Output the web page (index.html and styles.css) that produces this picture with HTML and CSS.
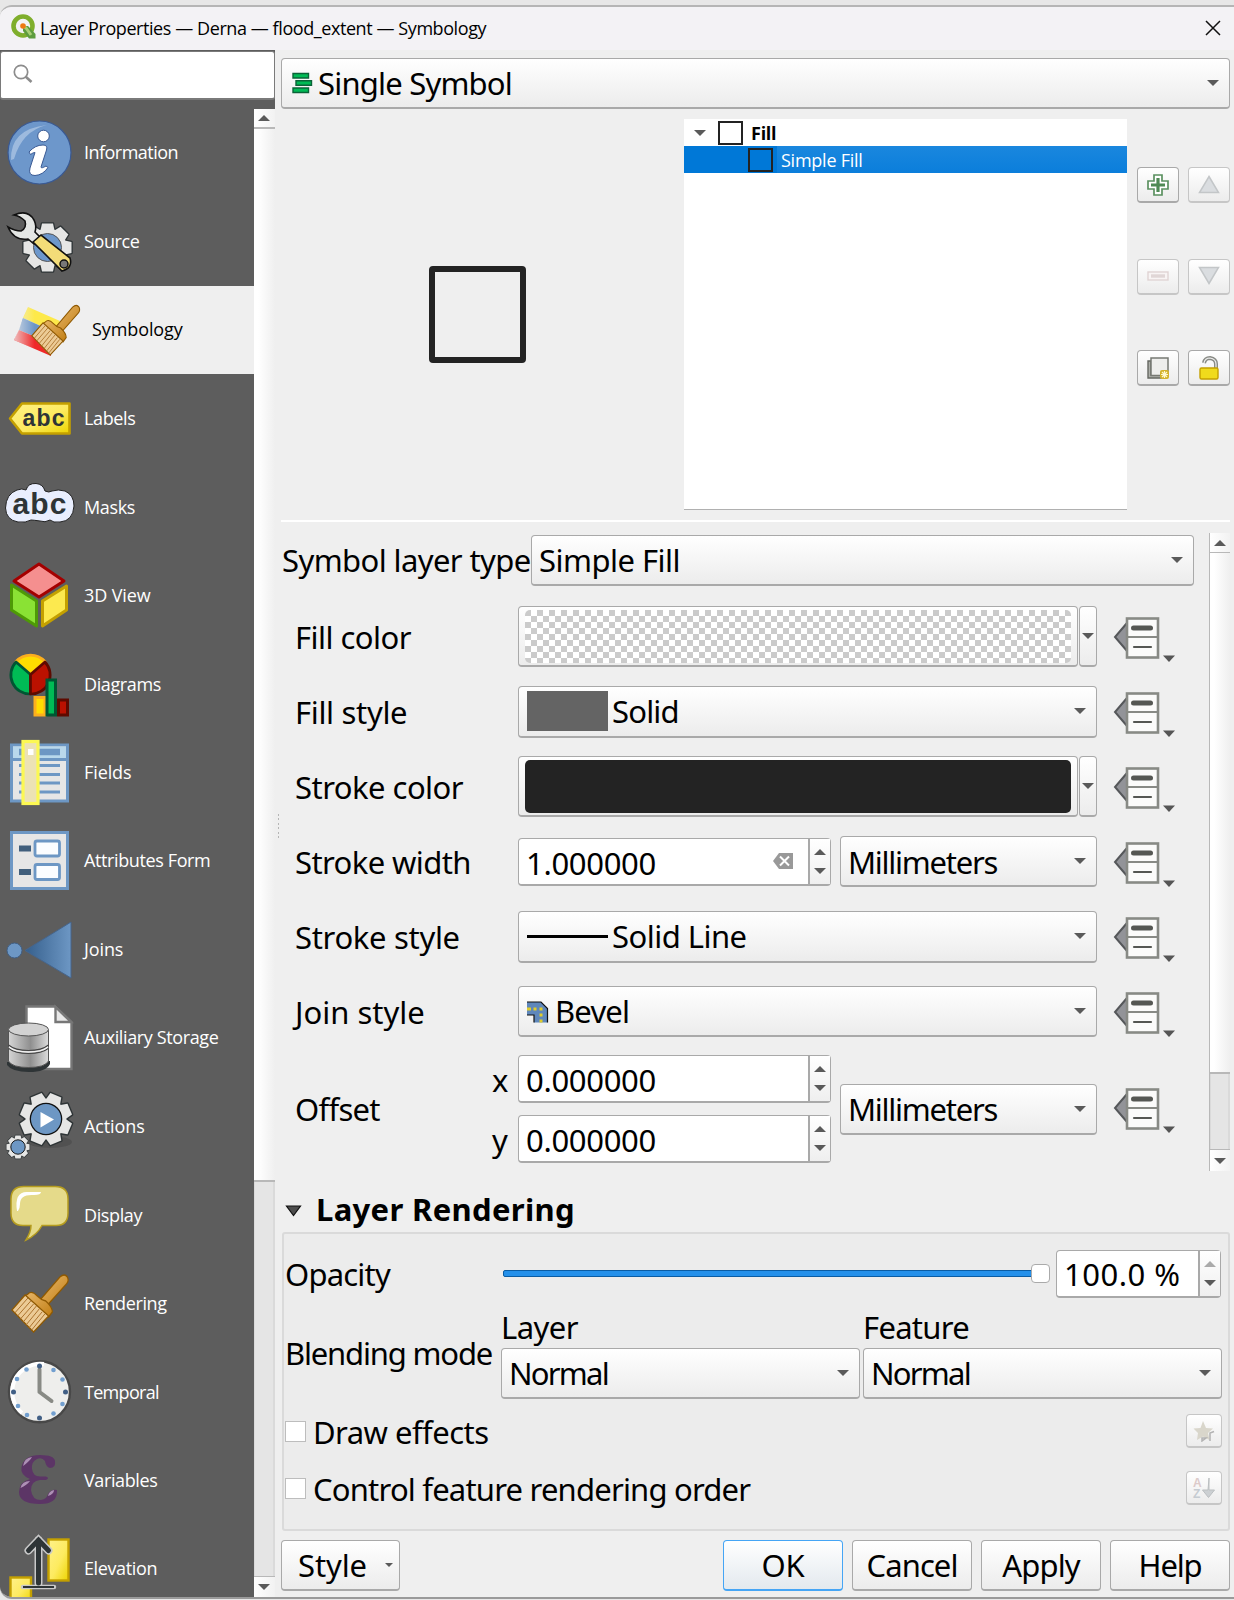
FILE: index.html
```html
<!DOCTYPE html>
<html lang="en">
<head>
<meta charset="utf-8">
<title>Layer Properties</title>
<link rel="stylesheet" href="styles.css">
</head>
<body>
<svg class="defs" width="0" height="0" aria-hidden="true">
  <defs>
    <linearGradient id="gWhite" x1="0" y1="0" x2="0" y2="1"><stop offset="0" stop-color="#fbfbfb"/><stop offset="1" stop-color="#d4d4d2"/></linearGradient>
    <linearGradient id="gYellow" x1="0" y1="0" x2="1" y2="1"><stop offset="0" stop-color="#fff18a"/><stop offset=".55" stop-color="#fdeb60"/><stop offset="1" stop-color="#edd400"/></linearGradient>
    <linearGradient id="gJoin" x1="0" y1="0" x2="1" y2="0"><stop offset="0" stop-color="#355f8c"/><stop offset="1" stop-color="#6d97c4"/></linearGradient>
    <linearGradient id="gCyl" x1="0" y1="0" x2="1" y2="0"><stop offset="0" stop-color="#d5d5d5"/><stop offset=".55" stop-color="#8f8f8f"/><stop offset="1" stop-color="#dcdcdc"/></linearGradient>
    <linearGradient id="gWood" x1="0" y1="0" x2="1" y2="1"><stop offset="0" stop-color="#e9b96e"/><stop offset="1" stop-color="#c17d11"/></linearGradient>
    <linearGradient id="gFade" x1="0" y1="0" x2="1" y2="0"><stop offset="0" stop-color="#efefef" stop-opacity=".75"/><stop offset=".45" stop-color="#efefef" stop-opacity="0"/></linearGradient>
    <g id="tooth8">
      <path id="t8" d="M-5.500 -24 L5.500 -24 L7.500 -15 L-7.500 -15 Z"/>
      <use href="#t8" transform="rotate(45)"/><use href="#t8" transform="rotate(90)"/><use href="#t8" transform="rotate(135)"/>
      <use href="#t8" transform="rotate(180)"/><use href="#t8" transform="rotate(225)"/><use href="#t8" transform="rotate(270)"/><use href="#t8" transform="rotate(315)"/>
      <circle r="19"/>
    </g>
    <g id="gear">
      <use href="#tooth8" fill="#2e3436" stroke="#2e3436" stroke-width="2.600" stroke-linejoin="round"/>
      <use href="#tooth8" fill="#e6e6e5"/>
    </g>
    <g id="brush">
      <path d="M29 28 L52 3 Q57 -1 60 3 Q62 7 59 10 L36 34 Z" fill="url(#gWood)" stroke="#8f5902" stroke-width="1.300"/>
      <path d="M18 20 Q22 16 28 22 Q32 26 37 27 Q44 33 44 38 L40 43 L12 24 Z" fill="url(#gWood)" stroke="#8f5902" stroke-width="1.300"/>
      <path d="M15 21 L1 36 L24 58 L40 42 Z" fill="#eccb96" stroke="#8f5902" stroke-width="1.300"/>
      <path d="M18 24 L4 39 M21 27 L7 42 M24 30 L10 45 M27 32 L13 48 M30 35 L16 51 M33 38 L19 54 M36 40 L22 56" stroke="#a9702a" stroke-width="1" fill="none"/>
    </g>
    <g id="dd">
      <path d="M14 6 L2 20 L14 34 Z" fill="#929398" stroke="#55575a" stroke-width="2"/>
      <rect x="14" y="1.500" width="31" height="39" fill="#fbfbfa" stroke="#888a85" stroke-width="2.600"/>
      <path d="M14 20 H45" stroke="#888a85" stroke-width="2"/>
      <path d="M20.500 11 H37.500" stroke="#555753" stroke-width="5" stroke-linecap="round"/>
      <path d="M21 30 H38" stroke="#555753" stroke-width="2.200" stroke-linecap="round"/>
      <path d="M50 38.500 H62 L56 45 Z" fill="#555"/>
    </g>
  </defs>
</svg>
<div class="window">
  <header class="titlebar">
    <svg class="logo" width="26" height="26" viewBox="0 0 26 26"><circle cx="12" cy="12" r="9.500" fill="none" stroke="#7fae2c" stroke-width="4.600"/><path d="M12 12 L17 12 L24.500 20 V24.500 H18 L12 17 Z" fill="#5d9c3e"/><path d="M12 12 L15 14 L20 21" stroke="#a8cf74" stroke-width="3" fill="none"/><circle cx="12" cy="12" r="2.800" fill="#ee7913"/></svg>
    <span class="title">Layer Properties — Derna — flood_extent — Symbology</span>
    <svg class="close" width="16" height="16" viewBox="0 0 16 16"><path d="M1 1 L15 15 M15 1 L1 15" stroke="#111" stroke-width="1.500"/></svg>
  </header>
  <div class="body">
    <aside class="sidebar">
      <div class="search"><svg width="20" height="20" viewBox="0 0 20 20"><circle cx="8" cy="8" r="6.700" fill="none" stroke="#8c8c8c" stroke-width="1.700"/><path d="M12.500 12.500 L18.500 18" stroke="#8c8c8c" stroke-width="2.600"/></svg></div>
      <div class="nav-wrap">
        <nav class="nav">
          <a class="item"><svg width="76" height="88" viewBox="0 0 76 88"><circle cx="39.500" cy="43.500" r="31.500" fill="#6d97cb" stroke="#3a5a94" stroke-width="1.200"/><path d="M11 51 Q10 20 47 16 Q22 22 14 50 Z" fill="#a9c3e2" opacity=".8"/><circle cx="43.500" cy="27" r="5.800" fill="#fff" stroke="#3a5a94" stroke-width="1"/><path d="M29 43 Q35 36 43 36 Q48 36 46.500 41 L41 58 Q41 60 46 57 L48 58.500 Q43 66 35 66.500 Q28 66.500 30 59 L35 43.500 Q33 43.500 30.500 45.500 Z" fill="#fff" stroke="#3a5a94" stroke-width="1"/></svg><span class="t5">Information</span></a>
          <a class="item"><svg width="76" height="88" viewBox="0 0 76 88"><g transform="translate(47.500 49.500)"><use href="#gear"/><circle r="14" fill="#6d97cb" stroke="#555" stroke-width="1"/></g><path d="M14 17 Q28 11 34 22 Q37 28 35 34 L41 40 L34 46 L28 41 Q14 43 8 29 Q15 33 21 33 Q27 30 25 23 Q20 18 14 17 Z" fill="#e4e6e4" stroke="#111" stroke-width="1.600"/><path d="M33 44 L41 37 L70 60 Q73 70 62 73 Z" fill="#f3dc78" stroke="#111" stroke-width="1.600"/><circle cx="64" cy="66" r="4" fill="#777" stroke="#111" stroke-width="1.500"/></svg><span>Source</span></a>
          <a class="item selected"><svg width="84" height="88" viewBox="0 0 84 88"><path d="M28 21 L60 35 L54 46 L23 32 Z" fill="#fde94a"/><path d="M23 32 L54 46 L50 57 L19 44 Z" fill="#6b94c6"/><path d="M19 44 L50 57 L51 70 L14 54 Z" fill="#ef2929"/><path d="M28 21 L60 35 L51 70 L14 54 Z" fill="url(#gFade)"/><g transform="translate(31 18.500) scale(.8 .87)"><use href="#brush"/></g></svg><span class="t1">Symbology</span></a>
          <a class="item"><svg width="76" height="88" viewBox="0 0 76 88"><path d="M10 44.500 L22 29.500 H69.500 V59.500 H22 Z" fill="url(#gYellow)" stroke="#c4a000" stroke-width="2.600" stroke-linejoin="round"/><text x="43.500" y="51.500" class="abc" font-size="23" textLength="42">abc</text></svg><span>Labels</span></a>
          <a class="item"><svg width="76" height="88" viewBox="0 0 76 88"><path d="M17 27 Q22 25 26 27 Q28 20 36 20.500 Q43 21 45 28 Q49 30 52 28 Q58 26 65 28 Q74 32 74 43 Q73 58 60 59 Q53 60 50 57 Q45 60 40 58 Q33 57 31 57 Q26 60 18 59 Q6 57 5.500 45 Q6 31 17 27 Z" fill="#e9eefe" stroke="#222" stroke-width="1"/><text x="39.500" y="51" class="abc" font-size="30" textLength="54">abc</text></svg><span>Masks</span></a>
          <a class="item"><svg width="76" height="88" viewBox="0 0 76 88"><g stroke-width="3" stroke-linejoin="round"><path d="M39 13 L64 30 L39 46 L14 30 Z" fill="#f58f8f" stroke="#a40000"/><path d="M11.500 34 L36.500 50 V75 L11.500 59 Z" fill="#8ae234" stroke="#4e9a06"/><path d="M42.500 50 L66.500 35 V59 L42.500 75 Z" fill="#fce94f" stroke="#c4a000"/></g></svg><span class="t1">3D View</span></a>
          <a class="item"><svg width="76" height="88" viewBox="0 0 76 88"><g stroke-width="2.700" stroke-linejoin="round"><path d="M30.500 34.500 L16 21.500 A19.500 19.500 0 0 1 45 21.500 Z" fill="#ffdd00" stroke="#fcaf1e"/><path d="M30.500 34.500 L16 22 A19 19 0 0 0 30.500 54 Z" fill="#00bb55" stroke="#005533"/><path d="M30.500 34.500 L45 22 A19 19 0 0 1 30.500 54 Z" fill="#bb1100" stroke="#5e0a00"/></g><g stroke-width="3"><path d="M35 57.500 H45 V75 H35 Z" fill="#ffdd00" stroke="#fcaf1e"/><path d="M58.500 60 H67.500 V75 H58.500 Z" fill="#bb1100" stroke="#5e0a00"/><path d="M47 40 H55.500 V75 H47 Z" fill="#00bb55" stroke="#005533"/></g></svg><span>Diagrams</span></a>
          <a class="item"><svg width="76" height="88" viewBox="0 0 76 88"><rect x="11.500" y="17" width="56" height="56" fill="#e6e6e6" stroke="#6d97c4" stroke-width="3"/><rect x="13" y="18.500" width="53" height="12" fill="#b9d8ec"/><path d="M13 31.500 H66" stroke="#6d97c4" stroke-width="3"/><path d="M19 24 H60" stroke="#6d97c4" stroke-width="6.500"/><path d="M19 37.500 H60 M19 46.500 H60 M19 55 H60 M19 64 H60" stroke="#6d97c4" stroke-width="2.800"/><rect x="23" y="13.500" width="15" height="62" fill="#ece2b4" stroke="#fcf852" stroke-width="3.200"/><rect x="28" y="21" width="5.500" height="6" fill="#fff"/></svg><span class="t1">Fields</span></a>
          <a class="item"><svg width="76" height="88" viewBox="0 0 76 88"><rect x="11.500" y="16.500" width="56" height="56" fill="#e6e6e6" stroke="#6d97c4" stroke-width="3"/><path d="M19 32.500 H31 M19 56 H31" stroke="#415f7c" stroke-width="6"/><g fill="#fbfdff" stroke="#6d97c4" stroke-width="2.800"><rect x="35" y="25" width="24.500" height="15" rx="2"/><rect x="35" y="48.500" width="24.500" height="15" rx="2"/></g></svg><span>Attributes Form</span></a>
          <a class="item"><svg width="76" height="88" viewBox="0 0 76 88"><circle cx="14.500" cy="45.500" r="7.500" fill="#6d97c4" stroke="#3f5f85" stroke-width="1"/><path d="M25 45.500 L71 17 V73 Z" fill="url(#gJoin)" stroke="#46658c" stroke-width="1"/></svg><span class="t1">Joins</span></a>
          <a class="item"><svg width="76" height="88" viewBox="0 0 76 88"><path d="M26.500 13.500 H55 L71.500 29 V76 H26.500 Z" fill="#fff" stroke="#777" stroke-width="2.400"/><path d="M55.500 14 V29 H71 Z" fill="#e8e8e8" stroke="#777" stroke-width="2.400"/><path d="M7 69 V72 Q12 79 29 79 Q46 79 50 71 V68 Z" fill="#2e3436"/><path d="M8.500 37 V68 Q12 74.500 28.500 74.500 Q45 74.500 48.500 68 V37 Z" fill="url(#gCyl)" stroke="#555" stroke-width="1"/><ellipse cx="28.500" cy="36.500" rx="20" ry="6.500" fill="#d2d2d2" stroke="#555"/><path d="M8.500 52 Q15 57.500 28.500 57.500 Q42 57.500 48.500 52" fill="none" stroke="#444" stroke-width="1.200"/><path d="M9 55.500 Q15 60.500 28.500 60.500 Q42 60.500 48 55.500" fill="none" stroke="#444" stroke-width="1.200"/><path d="M9 54 Q15 59 28.500 59 Q42 59 48 54" fill="none" stroke="#f3f3f3" stroke-width="1.400"/></svg><span>Auxiliary Storage</span></a>
          <a class="item"><svg width="76" height="88" viewBox="0 0 76 88"><ellipse cx="50" cy="61" rx="22" ry="6" fill="#4a4a4a" opacity=".6"/><g transform="translate(46 38) rotate(22.500) scale(1.070)"><use href="#gear"/><circle r="14.600" fill="#6d97c4" stroke="#111" stroke-width="1.200"/></g><path d="M40.500 31 V46.500 L54 38.500 Z" fill="#fff"/><g transform="translate(18 66) scale(.48)"><use href="#gear"/><circle r="15" fill="#6d97c4" stroke="#111" stroke-width="2"/></g></svg><span class="t1">Actions</span></a>
          <a class="item"><svg width="76" height="88" viewBox="0 0 76 88"><path d="M24 16.500 H55 Q68 16.500 68 29 V43 Q68 55.500 56 55.500 H42 Q37 65 26 70 Q31 62 31 55.500 H23 Q11 55.500 11 43 V29 Q11 16.500 24 16.500 Z" fill="#e5da8a" stroke="#b59c1f" stroke-width="1.500"/><path d="M17 41 Q14 21 28 22 L41 22 Q41 25 34 25 Q20 24 20 34 Q20 38 18 41 Z" fill="#fff"/></svg><span>Display</span></a>
          <a class="item"><svg width="76" height="88" viewBox="0 0 76 88"><g transform="translate(11 16) scale(.94 1)"><use href="#brush"/></g></svg><span>Rendering</span></a>
          <a class="item"><svg width="76" height="88" viewBox="0 0 76 88"><circle cx="39.500" cy="44.800" r="30.500" fill="#eeeeec" stroke="#484848" stroke-width="2.400"/><path d="M22 66 A28 28 0 0 1 44 17" fill="none" stroke="#fff" stroke-width="4"/><path d="M39.500 22.500 V45 L51.500 54" fill="none" stroke="#888a85" stroke-width="4" stroke-linecap="round" stroke-linejoin="round"/><g fill="#415f85"><circle cx="39.500" cy="19" r="2.500"/><circle cx="65.500" cy="45" r="2.500"/><circle cx="39.500" cy="71" r="2.500"/><circle cx="13.500" cy="45" r="2.500"/></g><g fill="#729fcf"><circle cx="53.500" cy="23" r="2.300"/><circle cx="62.500" cy="32.500" r="2.300"/><circle cx="62.500" cy="57" r="2.300"/><circle cx="53.500" cy="66.500" r="2.300"/><circle cx="27" cy="68" r="2.300"/><circle cx="18" cy="59" r="2.300"/><circle cx="17" cy="32" r="2.300"/><circle cx="26.500" cy="22.500" r="2.300"/></g></svg><span class="t7">Temporal</span></a>
          <a class="item"><svg width="76" height="88" viewBox="0 0 76 88"><path d="M55 26 Q56 33 50 33 Q46 32 45 26 Q42 22 37 24 Q31 27 32 34 Q33 41.500 40 41.500 L46 41.500 Q50 43 46 45 L40 45 Q31 46 31 55 Q32 65 41 65 Q47 64 48 59 Q51 54 57 55 Q58 69 40 69 Q19 69 19 57 Q19 47 30 44 Q20 40 21.500 32 Q24 20 40 20 Q54 20 55 26 Z" fill="#5c3566"/><path d="M23 31 Q24 23 32 22 Q30 26 23 31 Z M20.500 53 Q22 46 30 46 Q27 50 20.500 53 Z M48 61 Q49 56 54 55 Q54 59 48 61 Z" fill="#ad90b5"/></svg><span>Variables</span></a>
          <a class="item"><svg width="76" height="88" viewBox="0 0 76 88"><rect x="48.500" y="16.500" width="20" height="41" fill="url(#gYellow)" stroke="#c4a000" stroke-width="2.400"/><rect x="10.500" y="54.500" width="20.500" height="24" fill="url(#gYellow)" stroke="#c4a000" stroke-width="2.400"/><path d="M38.500 60 V17 M28.500 27.500 L38.500 17 L48.500 27.500" fill="none" stroke="#c9c9c9" stroke-width="8" stroke-linecap="round"/><path d="M23 64 H54" stroke="#c9c9c9" stroke-width="4.500" stroke-linecap="round"/><path d="M38.500 60 V17 M28.500 27.500 L38.500 17 L48.500 27.500" fill="none" stroke="#2e3436" stroke-width="5" stroke-linecap="round"/><path d="M23 64 H54" stroke="#2e3436" stroke-width="2"/></svg><span>Elevation</span></a>
        </nav>
        <div class="scroll side-scroll"><b class="cap"><i class="up"></i></b><b class="thumb"></b><b class="track"></b><b class="cap end"><i class="down"></i></b></div>
      </div>
    </aside>
    <div class="splitter"></div>
    <main class="main">
      <div class="combo renderer"><svg width="21" height="22" viewBox="0 0 21 22"><g fill="#00bb55" stroke="#0a6338" stroke-width="1.400"><path d="M1 1.500 H16.500 V6 H1 Z M4 8.700 H19.500 V13.200 H4 Z M1 16 H16.500 V20.500 H1 Z"/></g></svg><span class="t8">Single Symbol</span><i class="down"></i></div>
      <section class="symbol">
        <div class="preview"><div class="square"></div></div>
        <div class="tree">
          <div class="node"><i class="down"></i><b class="chip"></b><span>Fill</span></div>
          <div class="node child"><b class="chip"></b><span>Simple Fill</span></div>
        </div>
        <div class="tools">
          <button class="tool"><svg width="22" height="22" viewBox="0 0 22 22"><path d="M7 1 H15 V7 H21 V15 H15 V21 H7 V15 H1 V7 H7 Z" fill="#fff" stroke="#5b9160" stroke-width="1.700"/><path d="M11 4 V18 M4 11 H18" stroke="#4f8a55" stroke-width="3.200"/></svg></button>
          <button class="tool off"><svg width="22" height="22" viewBox="0 0 22 22"><path d="M11 2.500 L20.500 18.500 H1.500 Z" fill="#dadde0" stroke="#c3c6c8" stroke-width="1.500"/></svg></button>
          <button class="tool off"><svg width="22" height="22" viewBox="0 0 22 22"><rect x="1" y="7" width="20" height="8" fill="#f8f4f4" stroke="#e0d4d4" stroke-width="1.400"/><path d="M4 11 H18" stroke="#e0d6d6" stroke-width="3.400"/></svg></button>
          <button class="tool off"><svg width="22" height="22" viewBox="0 0 22 22"><path d="M11 18.500 L20.500 2.500 H1.500 Z" fill="#dadde0" stroke="#c3c6c8" stroke-width="1.500"/></svg></button>
          <button class="tool"><svg width="22" height="22" viewBox="0 0 22 22"><path d="M1 4 H4 V18 H15 V21 H1 Z" fill="#aeb0aa" stroke="#666862" stroke-width="1.400"/><rect x="4" y="1" width="17" height="17.500" fill="#eeeeec" stroke="#777973" stroke-width="1.500"/><rect x="13" y="13" width="9" height="9" rx="2" fill="#d5b32b"/><path d="M17.500 14 V21 M14 17.500 H21 M15 15 L20 20 M20 15 L15 20" stroke="#fff8d0" stroke-width="1.200"/></svg></button>
          <button class="tool"><svg width="22" height="24" viewBox="0 0 22 24"><path d="M6 7 Q7 2 12 2 Q18 3 18 8 V12" fill="none" stroke="#888a85" stroke-width="4"/><path d="M6 7 Q7 2 12 2 Q18 3 18 8 V12" fill="none" stroke="#eee" stroke-width="1.200"/><rect x="2" y="12" width="18" height="11" rx="1.500" fill="#f0db1c" stroke="#c4a000" stroke-width="1.400"/></svg></button>
        </div>
      </section>
      <section class="props">
        <div class="form">
          <div class="type-row"><label class="t6">Symbol layer type</label><div class="combo"><span class="t5">Simple Fill</span><i class="down"></i></div></div>
          <div class="row"><label class="t5">Fill color</label><div class="color"><b class="swatch checker"></b></div><div class="color-menu"><i class="down"></i></div><svg class="dd" width="64" height="48" viewBox="0 0 64 48"><use href="#dd"/></svg></div>
          <div class="row"><label class="t3">Fill style</label><div class="combo tall"><b class="solid"></b><span class="t8">Solid</span><i class="down"></i></div><svg class="dd" width="64" height="48" viewBox="0 0 64 48"><use href="#dd"/></svg></div>
          <div class="row"><label class="t5">Stroke color</label><div class="color"><b class="swatch dark"></b></div><div class="color-menu"><i class="down"></i></div><svg class="dd" width="64" height="48" viewBox="0 0 64 48"><use href="#dd"/></svg></div>
          <div class="row"><label class="t6">Stroke width</label><div class="spin"><span class="t3">1.000000</span><svg class="clear" width="20" height="16" viewBox="0 0 20 16"><path d="M0 8 L6 0 H20 V16 H6 Z" fill="#999"/><path d="M7 3.500 L16 12.500 M16 3.500 L7 12.500" stroke="#fff" stroke-width="2"/></svg><b class="steps"><i class="up"></i><i class="down"></i></b></div><div class="combo unit"><span class="t13">Millimeters</span><i class="down"></i></div><svg class="dd" width="64" height="48" viewBox="0 0 64 48"><use href="#dd"/></svg></div>
          <div class="row"><label class="t3">Stroke style</label><div class="combo tall"><b class="line"></b><span class="t5">Solid Line</span><i class="down"></i></div><svg class="dd" width="64" height="48" viewBox="0 0 64 48"><use href="#dd"/></svg></div>
          <div class="row"><label class="t0">Join style</label><div class="combo"><svg class="join" width="22" height="22" viewBox="0 0 22 22"><path d="M0 1 H14 L20.500 7.500 V21.500 H7 V14 H0 Z" fill="#5f87bb"/><path d="M0 1 H14 L20.500 7.500 V21.500 M7 21.500 V14 H0" fill="none" stroke="#111" stroke-width="1.200"/><path d="M0 8 H4 M6.500 8 H9.500 M12.500 8 H15.500" stroke="#e1cd2b" stroke-width="3"/><path d="M12.500 14 H15.500 M12.500 20 H15.500" stroke="#e1cd2b" stroke-width="3"/></svg><span class="t8">Bevel</span><i class="down"></i></div><svg class="dd" width="64" height="48" viewBox="0 0 64 48"><use href="#dd"/></svg></div>
          <div class="row offset"><label class="t7">Offset</label>
            <div class="pair"><span>x</span><div class="spin"><span class="t3">0.000000</span><b class="steps"><i class="up"></i><i class="down"></i></b></div><span>y</span><div class="spin"><span class="t3">0.000000</span><b class="steps"><i class="up"></i><i class="down"></i></b></div></div>
            <div class="combo unit"><span class="t13">Millimeters</span><i class="down"></i></div><svg class="dd" width="64" height="48" viewBox="0 0 64 48"><use href="#dd"/></svg></div>
        </div>
        <div class="scroll form-scroll"><b class="cap"><i class="up"></i></b><b class="thumb"></b><b class="track"></b><b class="cap end"><i class="down"></i></b></div>
      </section>
      <h2 class="heading"><svg width="17" height="12" viewBox="0 0 17 12"><path d="M1.500 1 H15.500 L8.500 10.500 Z" fill="#4d4d4d" stroke="#111" stroke-width="1.200"/></svg><span>Layer Rendering</span></h2>
      <section class="group">
        <div class="opacity"><label class="t8">Opacity</label><div class="slider"><b></b></div><div class="spin"><span class="wide">100.0 %</span><b class="steps"><i class="up dim"></i><i class="down"></i></b></div></div>
        <div class="blend"><label class="t12">Blending mode</label><div class="mode"><span class="t5">Layer</span><div class="combo"><span class="t17">Normal</span><i class="down"></i></div></div><div class="mode"><span class="t7">Feature</span><div class="combo"><span class="t17">Normal</span><i class="down"></i></div></div></div>
        <div class="check"><b></b><span class="t5">Draw effects</span><button class="mini"><svg width="22" height="22" viewBox="0 0 22 22"><path d="M10 1 L13 8 L20 8.500 L15 13 L16.500 20 L10 16.500 L4 20 L5 13 L0.500 8.500 L7.500 8 Z" fill="#d9d6cb"/><path d="M17 21 V13 L21 11.500 M9 21 V18 L13 18 Z" fill="none" stroke="#b3b3b3" stroke-width="1.500"/></svg></button></div>
        <div class="check"><b></b><span class="t8">Control feature rendering order</span><button class="mini"><svg width="24" height="24" viewBox="0 0 24 24"><text x="1" y="10.500" class="az" fill="#dccaca">A</text><text x="1" y="21.500" class="az" fill="#c5cbd1">Z</text><path d="M17 2 V14 H22.500 L16.500 21.500 L10.500 14 H16 Z" fill="#ccd0d3" stroke="#bbbfc1" stroke-width="1"/></svg></button></div>
      </section>
      <footer class="footer"><button class="btn style"><span class="t1">Style</span><i class="down"></i></button><button class="btn ok"><span class="t3">OK</span></button><button class="btn"><span class="t9">Cancel</span></button><button class="btn"><span class="t8">Apply</span></button><button class="btn"><span class="t12">Help</span></button></footer>
    </main>
  </div>
</div>
</body>
</html>
```
FILE: styles.css
```css
* { box-sizing: border-box; }
body { margin: 0; width: 1234px; height: 1600px; overflow: hidden; background: #e7e7e7; color: #000; font-family: "Noto Sans", sans-serif; }
.defs { position: absolute; }
i, b { display: block; flex: none; }
button { font: inherit; color: inherit; padding: 0; margin: 0; }
.window { margin-top: 5px; width: 1240px; height: 1594px; border-top: 2px solid #b5b5b5; border-bottom: 2px solid #9a9a9a; border-radius: 12px 0 0 12px; overflow: hidden; background: #efefef; display: flex; flex-direction: column; }
.titlebar { height: 43px; flex: none; display: flex; align-items: center; padding: 0 20px 0 11px; width: 1234px; background: #f3f2f5; }
.logo { margin-top: -3px; }
.title { font: 18px/24px "Open Sans", sans-serif; letter-spacing: -.42px; margin: -2px auto 0 3px; }
.close { margin-right: -7px; margin-top: -2px; }
.body { flex: 1; display: flex; width: 1234px; min-height: 0; }

/* arrows */
.up, .down { width: 0; height: 0; border: 6px solid transparent; }
.down { border-top: 6px solid #5a5a5a; border-bottom: 0; }
.up { border-bottom: 6px solid #5a5a5a; border-top: 0; }
.dim { border-bottom-color: #aaa; }

/* sidebar */
.sidebar { width: 275px; flex: none; background: #5d5d5d; display: flex; flex-direction: column; }
.search { height: 49px; margin-top: 1px; flex: none; background: #fff; border: 1px solid #7a7a7a; border-bottom-width: 2px; border-radius: 3px; padding: 12px; }
.nav-wrap { flex: 1; margin-top: 9px; display: flex; min-height: 0; }
.nav { width: 254px; overflow: hidden; }
.item { height: 88.400px; display: flex; align-items: center; color: #fff; font: 18px/24px "Open Sans", sans-serif; letter-spacing: -.38px; white-space: nowrap; }
.item span { margin: -2px 0 0 8px; }
.item:nth-child(n+4) span { margin-top: 0; }
.item:nth-child(n+12) span { margin-top: 2px; }
.selected { background: #efefef; color: #000; }
.abc { font-family: "Liberation Sans", sans-serif; font-weight: bold; fill: #2e3436; text-anchor: middle; letter-spacing: 0; }
.scroll { width: 21px; display: flex; flex-direction: column; background: #e5e5e5; }
.cap { height: 20px; display: flex; align-items: center; justify-content: center; background: linear-gradient(90deg, #fff, #f2f2f2); border-bottom: 2px solid #b8b8b8; }
.end { border-bottom: 0; border-top: 1px solid #b8b8b8; }
.thumb { background: linear-gradient(90deg, #fff 20%, #efefef); border-bottom: 2px solid #b8b8b8; }
.track { flex: 1; border-right: 2px solid #dadada; border-left: 1px solid #dadada; }
.side-scroll .thumb { height: 1053px; }
.side-scroll .end { height: 21px; }
.side-scroll .cap { padding-right: 1px; }
.splitter { width: 6px; background: repeating-linear-gradient(#b5b5b5 0 2px, transparent 2px 4.400px) 3px 764px / 1px 25px no-repeat; }

/* tracking steps for labels */
.t0 { letter-spacing: 0; }
.t1, .item .t1 { letter-spacing: -.1px; }
.t3 { letter-spacing: -.32px; }
.t5, .item .t5 { letter-spacing: -.53px; }
.t6 { letter-spacing: -.6px; }
.t7, .item .t7 { letter-spacing: -.7px; }
.t8 { letter-spacing: -.8px; }
.t9 { letter-spacing: -.92px; }
.t12 { letter-spacing: -1.180px; }
.t13 { letter-spacing: -1.260px; }
.t17 { letter-spacing: -1.750px; }
.wide { letter-spacing: .5px; }

/* shared controls */
.main { width: 949px; display: flex; flex-direction: column; font-size: 31px; line-height: 40px; white-space: nowrap; }
.combo, .spin, .color, .color-menu, .btn, .tool, .mini { border: 1px solid #a9a9a9; border-bottom-width: 2px; border-radius: 4px; background: linear-gradient(#fff, #ececec); display: flex; align-items: center; }
.combo { height: 51px; padding: 0 10px 0 7px; }
.combo > .down { margin-left: auto; }
.renderer { margin-top: 8px; padding-left: 10px; flex: none; }
.renderer span { margin-left: 5px; }

.symbol { height: 413px; flex: none; display: flex; border-bottom: 2px solid #fff; padding-top: 10px; }
.preview { width: 403px; padding: 147px 0 0 148px; }
.square { width: 97px; height: 97px; border: 6px solid #232323; border-radius: 4px; }
.tree { width: 443px; height: 391px; background: #fff; border-bottom: 1px solid #b0b0b0; font: 18px/24px "Open Sans", sans-serif; letter-spacing: -.25px; }
.node { height: 27px; display: flex; align-items: center; padding-left: 10px; font-weight: bold; }
.chip { width: 25px; height: 24px; border: 2px solid #232323; margin: 0 8px 0 12px; }
.child { padding-left: 52px; color: #fff; font-weight: normal; background: linear-gradient(90deg, #0078d7 93px, transparent 93px), linear-gradient(#1a87de, #0b7edb); }
.tools { display: grid; grid-template: repeat(3, 36px) / 42px 42px; gap: 55.500px 9px; margin: 48px 0 0 10px; align-content: start; }
.tool { width: 42px; height: 36px; justify-content: center; }
.off { border-color: #c6c6c6; }

/* symbol layer properties */
.props { height: 649px; flex: none; display: flex; padding-top: 11px; }
.form { width: 928px; }
.type-row { display: flex; align-items: center; padding: 2px 15px 0 0; margin-bottom: 13px; }
.type-row label { width: 250px; padding-left: 1px; margin-top: -2px; }
.type-row .combo { flex: 1; }
.row { height: 75px; display: flex; align-items: center; }
.row > label { width: 237px; padding-left: 14px; }
.row > .combo { width: 579px; }
.row > .unit { width: 257px; margin-left: 9px; }
.row > .unit span { margin-top: 2px; }
.row > .tall { height: 52px; }
.color { width: 560px; height: 61px; padding: 0 6px; }
.swatch { flex: 1; height: 53px; border-radius: 5px; }
.checker { background: repeating-conic-gradient(#fff 0 25%, #cbcbcb 0 50%) 0 0 / 12px 12px; }
.dark { background: #232323; }
.color-menu { width: 18px; height: 61px; margin-left: 1px; justify-content: center; }
.dd { margin: 8px 0 0 16px; }
.solid { width: 81px; height: 40px; background: #646464; margin: 0 4px 0 1px; }
.line { width: 81px; height: 3px; background: #000; margin: 0 4px 0 1px; }
.join { margin: 2px 6px 0 1px; }
.spin { width: 313px; height: 48px; padding-left: 7px; background: #fff; }
.row .spin > span { margin-top: 3px; }
.steps { width: 22px; height: 100%; margin-left: auto; border-left: 2px solid #a9a9a9; background: linear-gradient(#fff, #efefef); display: flex; flex-direction: column; align-items: center; justify-content: center; gap: 13px; }
.clear { margin-left: auto; }
.clear + .steps { margin-left: 15px; }
.row.offset { height: 108px; margin-top: 6px; }
.offset > label { width: 204px; }
.row.offset > .unit span { margin-top: 0; }
.offset .dd { margin-top: 6px; }
.pair { display: grid; grid-template-columns: 33px 313px; gap: 12px 0; align-items: center; }
.pair > span { padding: 2px 0 0 7px; }
.form-scroll { border-left: 1px solid #b8b8b8; }
.form-scroll .cap { border-bottom-width: 1px; }
.form-scroll .thumb { height: 521px; }
.form-scroll .end { height: 22px; }

/* layer rendering */
.heading { margin: 18px 0 3px; height: 40px; flex: none; display: flex; align-items: center; font-size: 31px; line-height: 40px; letter-spacing: .33px; gap: 14px; padding-left: 4px; }
.heading svg { margin-top: 4px; }
.group { height: 299px; flex: none; margin-left: 1px; border: 2px solid #dadada; background: #ececec; border-radius: 3px; padding: 16px 6px 0 1px; }
.opacity { display: flex; align-items: center; }
.opacity label { width: 218px; }
.slider { width: 547px; height: 7px; border: 1px solid #0a5ca3; border-radius: 2px; background: #2490ea; display: flex; align-items: center; justify-content: flex-end; margin-top: -1px; }
.slider b { width: 19px; height: 19px; border: 1px solid #aaa; border-radius: 4px; background: #fff; margin-right: -1px; }
.opacity .spin { width: 165px; margin-left: 6px; padding-left: 7px; }
.blend { display: flex; align-items: center; gap: 3px; margin-top: 9px; }
.blend label { width: 213px; margin-top: -1px; }
.mode { flex: 1; }
.mode > span { display: block; margin-bottom: 1px; }
.check { height: 34px; margin-top: 15px; display: flex; align-items: center; }
.check + .check { margin-top: 23px; }
.check b { width: 21px; height: 21px; background: #fff; border: 1px solid #bdbdbd; }
.check span { margin: 2px auto 0 7px; }
.mini { width: 36px; height: 34px; justify-content: center; border-color: #c6c6c6; }
.az { font: bold 12px "Liberation Sans", sans-serif; letter-spacing: 0; }
.footer { display: flex; gap: 9px; padding-top: 9px; }
.btn { width: 120px; height: 51px; justify-content: center; }
.btn.style { width: 119px; margin-right: auto; justify-content: space-between; padding: 0 6px 0 16px; }
.style .down { border-width: 4px 4px 0; }
.ok { border-color: #45a5f5; background: linear-gradient(#fff, #e3e9ee); }
```
